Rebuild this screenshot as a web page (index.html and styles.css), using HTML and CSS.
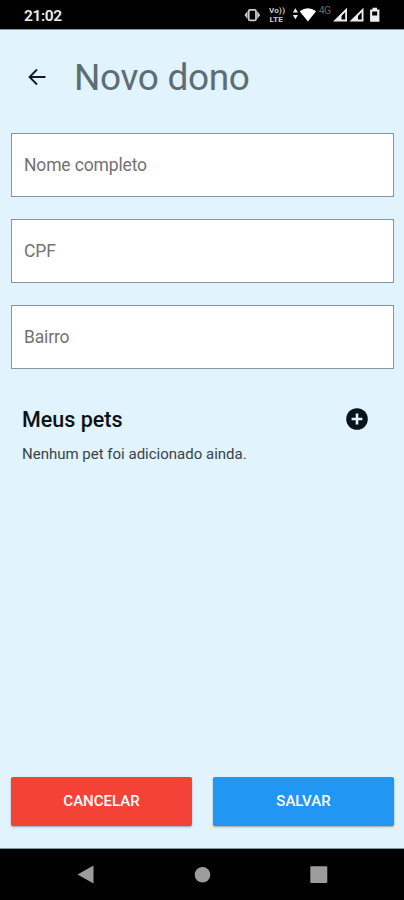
FILE: index.html
```html
<!DOCTYPE html>
<html lang="pt-BR">
<head>
<meta charset="utf-8">
<title>Novo dono</title>
<link rel="stylesheet" href="styles.css">
</head>
<body>
<header class="status">
  <span class="clock">21:02</span>
  <svg class="status-icons" width="140" height="29" viewBox="243 0 140 29">
    <path d="M244.500 15l3-4v8zM260.200 15l-3-4v8z" fill="#ccc"/>
    <rect x="248.700" y="9.800" width="7.300" height="10.600" rx="1.500" fill="none" stroke="#ccc" stroke-width="1.800"/>
    <text class="volte" x="269" y="13.300" textLength="16">Vo))</text>
    <text class="volte" x="269.500" y="21.800" textLength="13.500" lengthAdjust="spacingAndGlyphs">LTE</text>
    <path d="M292.800 12.500l2.600-4.200 2.600 4.200zM292.800 15l2.600 4.200 2.600-4.200z" fill="#eee"/>
    <path d="M299.700 11.300q8.200-6.200 16.400 0l-8.200 10.200z" fill="#fff"/>
    <text class="network" x="318.700" y="14" textLength="12.500">4G</text>
    <path fill-rule="evenodd" d="M333 21.500L347 7.700v13.800zM341.500 19.500h3.700v-7.300l-3.700 3.700z" fill="#eee"/>
    <path fill-rule="evenodd" d="M349.500 21.500l14-13.800v13.800zM358 19.500h3.700v-7.300l-3.700 3.700z" fill="#eee"/>
    <path fill-rule="evenodd" d="M372.500 7.800h4.500v1.700h2.400v12.200h-9.300V9.500h2.400zM372.200 11.500v4h5v-4z" fill="#eee"/>
  </svg>
</header>
<main class="screen">
  <div class="title-bar">
    <svg class="back" width="18" height="18" viewBox="0 0 18 18"><path d="M17.500 9H1.500M9 1.500L1.600 9l7.400 7.500"/></svg>
    <h1>Novo dono</h1>
  </div>
  <form class="form">
    <div class="field"><span>Nome completo</span></div>
    <div class="field"><span>CPF</span></div>
    <div class="field"><span>Bairro</span></div>
  </form>
  <section class="pets">
    <div class="pets-head">
      <h2>Meus pets</h2>
      <svg class="add" width="22" height="22" viewBox="0 0 22 22"><circle cx="11" cy="11" r="10.800" fill="#07141b"/><path d="M11 5.600v10.800M5.600 11h10.800" stroke="#e1f3fc" stroke-width="2.600"/></svg>
    </div>
    <p>Nenhum pet foi adicionado ainda.</p>
  </section>
  <div class="actions">
    <button class="btn cancel" type="button"><span>CANCELAR</span></button>
    <button class="btn save" type="button"><span>SALVAR</span></button>
  </div>
</main>
<nav class="nav">
  <svg width="404" height="50" viewBox="0 0 404 50" fill="#9c9c9c">
    <path d="M77.500 25.500L93.500 16.500v18z"/>
    <circle cx="202.500" cy="25.700" r="7.800"/>
    <rect x="310.300" y="17.300" width="17" height="16.700" rx="1"/>
  </svg>
</nav>
</body>
</html>
```
FILE: styles.css
```css
* { box-sizing: border-box; }
body {
  margin: 0;
  height: 900px;
  display: flex;
  flex-direction: column;
  background: #000;
  font-family: Roboto, "Liberation Sans", sans-serif;
  overflow: hidden;
}
.status {
  height: 29px;
  flex: none;
  display: flex;
  justify-content: space-between;
  padding: 0 21px 0 24px;
}
.clock { color: #eee; font-size: 15.5px; font-weight: 600; line-height: 32px; letter-spacing: -0.4px; }
.volte { font-size: 8px; font-weight: 700; fill: #ccc; }
.network { font-size: 10.500px; fill: #666; }
.screen {
  height: 820px;
  flex: none;
  display: flex;
  flex-direction: column;
  padding: 0 10px 22px 11px;
  background: #e1f3fc;
  border-top: 1px solid #84979e;
  border-bottom: 1px solid #84979e;
}
.title-bar {
  display: flex;
  align-items: center;
  gap: 28px;
  height: 95px;
  padding-left: 17px;
}
.back { fill: none; stroke: #101a1f; stroke-width: 1.9; margin-bottom: 2px; }
h1 { margin: 0; font-size: 37px; font-weight: 400; color: #5d6d74; letter-spacing: -0.35px; line-height: 44px; }
.form { display: flex; flex-direction: column; gap: 22px; padding-top: 8px; }
.field {
  height: 64px;
  display: flex;
  align-items: center;
  padding: 0 12px 1px;
  border: 1px solid #87979e;
  background: #fff;
  color: #727272;
  font-size: 17.5px;
  letter-spacing: -0.15px;
}
.pets { padding: 38px 26px 0 11px; }
.pets-head { display: flex; justify-content: space-between; align-items: center; height: 25px; }
.add { margin-bottom: 2px; }
h2 { margin: 0; font-size: 21.5px; font-weight: 500; color: #0b1317; }
.pets p { margin: 12px 0 0; font-size: 15px; line-height: 20px; color: #384349; }
.actions { display: flex; gap: 21px; margin-top: auto; }
.btn {
  flex: 1;
  height: 49px;
  padding: 0 0 1px;
  border: 0;
  border-radius: 2px;
  box-shadow: 0 1px 2px rgba(0, 0, 0, 0.35);
  color: #fff;
  font: 500 15px Roboto, sans-serif;
}
.cancel { background: #f44336; }
.save { background: #2196f3; }
.nav { height: 51px; flex: none; }
.nav svg { display: block; }
```
